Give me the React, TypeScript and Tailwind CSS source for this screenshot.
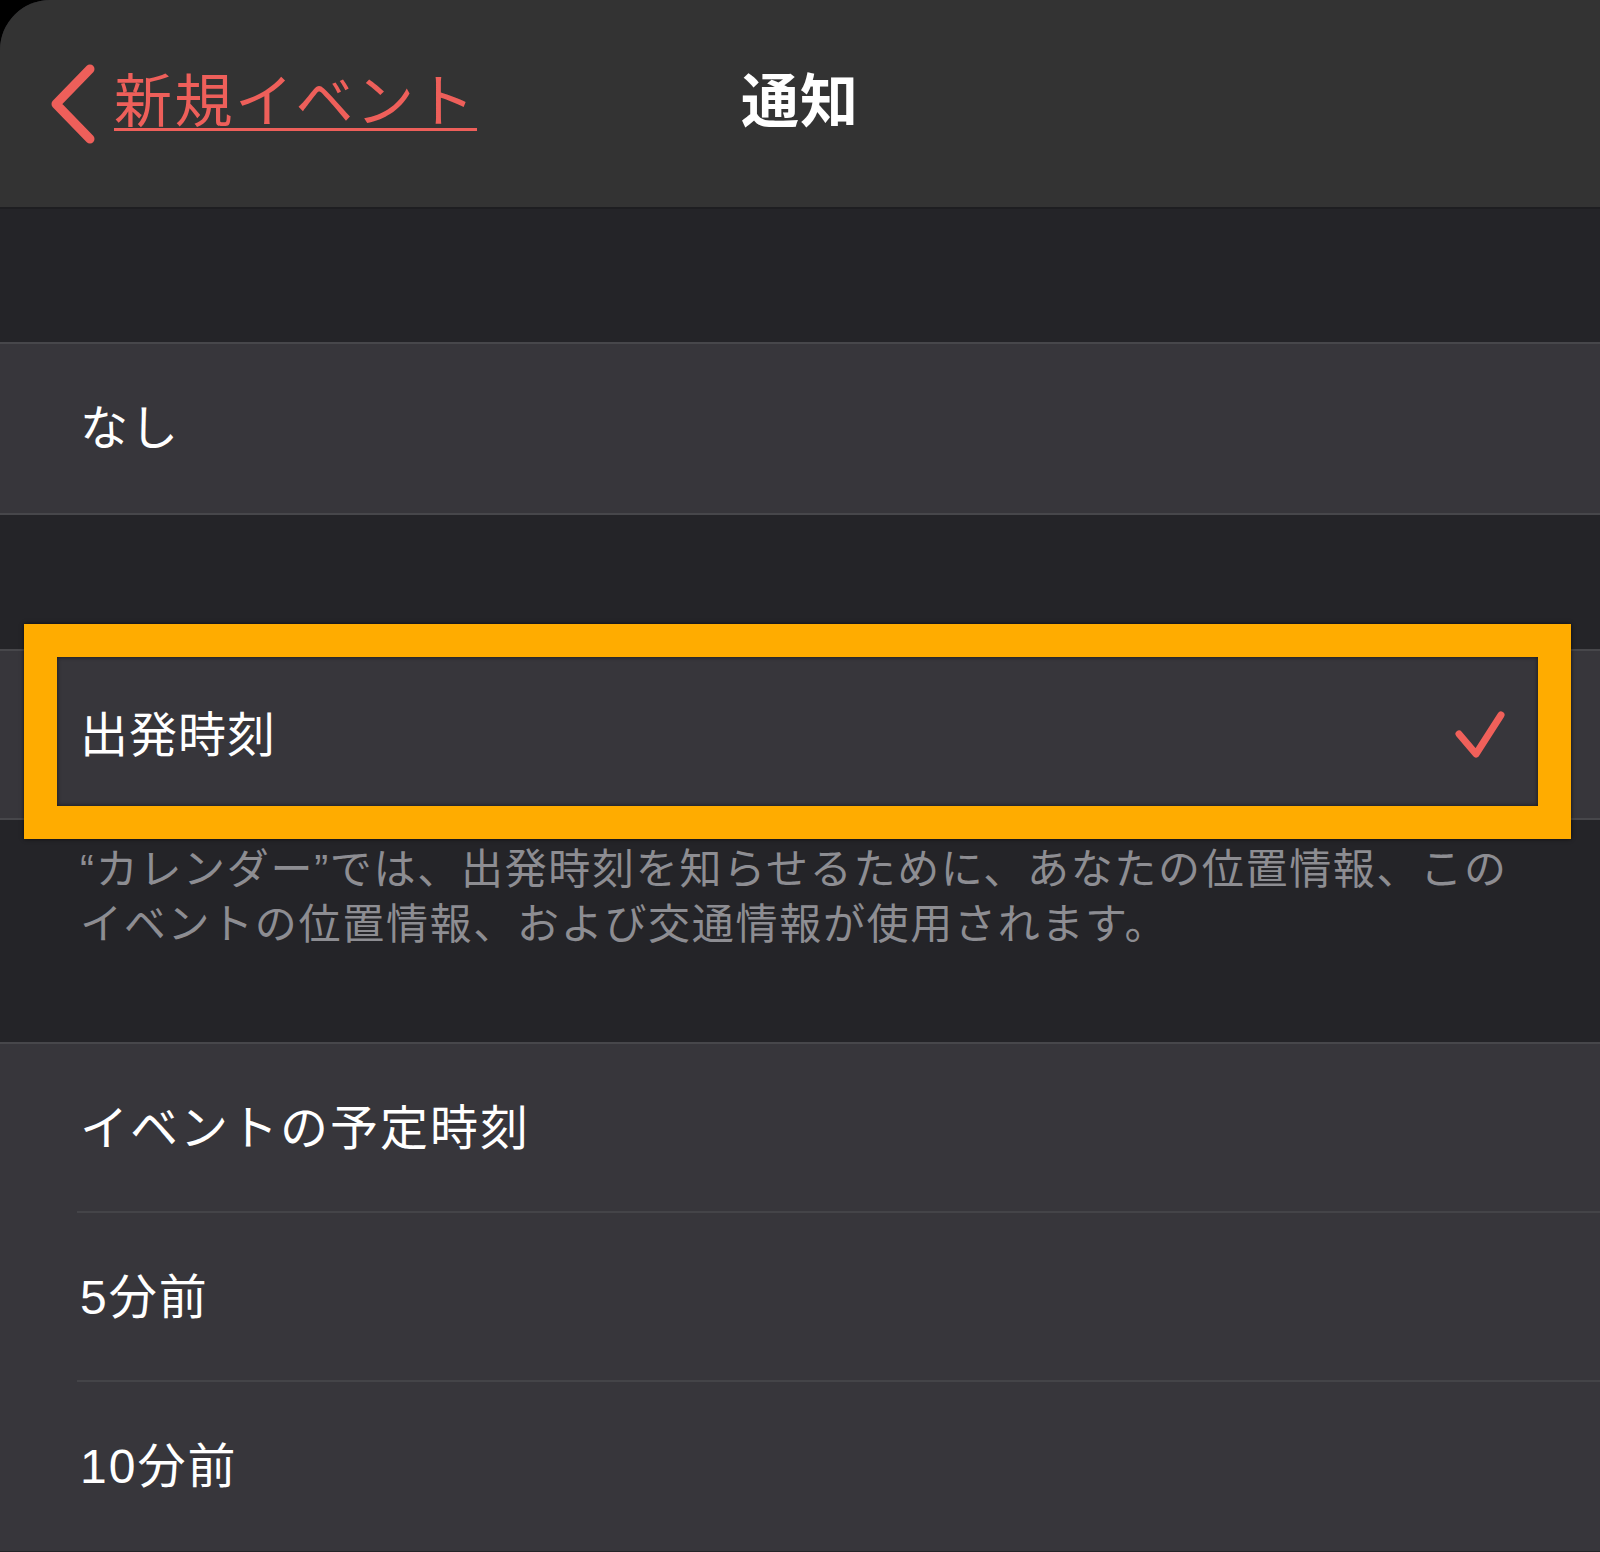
import React from 'react';

const FONT = '"Liberation Sans", "Noto Sans CJK JP", sans-serif';

const Row = ({ label, inset, last }: { label: string; inset?: boolean; last?: boolean }) => (
  <div className="relative h-[169px] bg-[#37363b] flex items-center pl-[80px]">
    <span className="text-[48px] tracking-[2px] text-white leading-none">{label}</span>
    {inset && !last && <div className="absolute left-[77px] right-0 bottom-0 h-[2px] bg-[#444448]" />}
  </div>
);

export default function App() {
  return (
    <div className="bg-black min-h-screen" style={{ fontFamily: FONT }}>
      <div className="h-[1552px] bg-[#242428] rounded-tl-[50px] overflow-hidden">
        {/* nav bar */}
        <div className="h-[209px] bg-[#333333] border-b-2 border-[#1e1e21] grid grid-cols-[1fr_auto_1fr] items-center">
          <div className="flex items-center pl-[48px] gap-[16px]">
            <svg width="50" height="82" viewBox="0 0 50 82" fill="none">
              <path d="M42 6 L8 41 L42 76" stroke="#ee5f5a" strokeWidth="9" strokeLinecap="round" strokeLinejoin="round" />
            </svg>
            <span className="text-[58px] leading-none tracking-[2.5px] text-[#ee5f5a] underline decoration-[3px] underline-offset-[6px] -mt-[4px]">
              新規イベント
            </span>
          </div>
          <div className="text-[58px] font-bold text-white leading-none tracking-[1px] -mt-[4px]">通知</div>
          <div />
        </div>

        <div className="h-[133px]" />

        <div className="border-t-2 border-b-2 border-[#47474b]">
          <Row label="なし" />
        </div>

        <div className="h-[134px]" />

        <div className="relative border-t-2 border-b-2 border-[#47474b]">
          <div className="h-[167px] bg-[#37363b] flex items-center justify-between pl-[80px] pr-[94px]">
            <span className="text-[48px] tracking-[1px] text-white leading-none mt-[2px]">出発時刻</span>
            <svg width="52" height="50" viewBox="0 0 52 50" fill="none">
              <path d="M5 24 L22 44 L47 5" stroke="#f0605a" strokeWidth="7" strokeLinecap="round" strokeLinejoin="round" />
            </svg>
          </div>
          {/* highlight annotation */}
          <div className="absolute left-[24px] right-[29px] -top-[27px] -bottom-[21px] border-[33px] border-[#ffac00] shadow-[0_0_4px_rgba(0,0,0,0.7),inset_0_0_4px_rgba(0,0,0,0.6)] pointer-events-none" />
        </div>

        <div className="pt-[22px] pb-[90px] pl-[80px] pr-[40px] text-[42px] leading-[55px] text-[#8d8d92] tracking-[1.7px] whitespace-nowrap">
          <div>“カレンダー”では、出発時刻を知らせるために、あなたの位置情報、この</div>
          <div>イベントの位置情報、および交通情報が使用されます。</div>
        </div>

        <div className="border-t-2 border-[#47474b]">
          <Row label="イベントの予定時刻" inset />
          <Row label="5分前" inset />
          <Row label="10分前" inset last />
        </div>
      </div>
    </div>
  );
}
